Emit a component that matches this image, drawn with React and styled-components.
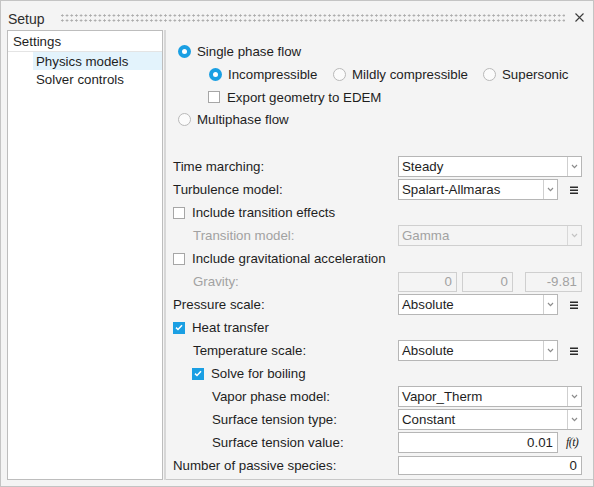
import React from "react";
import styled, { createGlobalStyle } from "styled-components";

const Global = createGlobalStyle`
  html, body { margin: 0; padding: 0; background: #f4f4f4; }
  body { font-family: "Liberation Sans", Arial, sans-serif; font-size: 13.3px; color: #1e1e1e; }
  * { box-sizing: border-box; }
`;

const Window = styled.div`
  width: 594px;
  height: 487px;
  border: 1px solid #c4c4c4;
  background: #f4f4f4;
  display: flex;
  flex-direction: column;
`;

const TitleBar = styled.div`
  height: 29px;
  flex: none;
  display: flex;
  align-items: center;
  padding-top: 4px;
`;

const Title = styled.div`
  font-size: 14px;
  color: #2e2e2e;
  padding-left: 7px;
  padding-top: 3px;
`;

const Grip = styled.div`
  flex: 1;
  height: 10px;
  margin: 1px 9px 0 15px;
  background-image: radial-gradient(circle, #ababab 0.9px, transparent 1.3px);
  background-size: 4.7px 5px;
  background-position: 0 0;
`;

const CloseBtn = styled.div`
  width: 10px;
  height: 10px;
  margin-right: 9px;
  display: flex;
  align-items: center;
  justify-content: center;
`;

const Body = styled.div`
  flex: 1;
  display: flex;
  padding-bottom: 6px;
`;

const TreePanel = styled.div`
  width: 156px;
  margin-left: 6px;
  background: #ffffff;
  border: 1px solid #bdbdbd;
  display: flex;
  flex-direction: column;
`;

const TreeHeader = styled.div`
  height: 21px;
  border-bottom: 1px solid #e4e4e4;
  padding-left: 5px;
  display: flex;
  align-items: center;
  color: #1e1e1e;
`;

const TreeItem = styled.div`
  height: 18px;
  margin-left: 25px;
  padding-left: 3px;
  display: flex;
  align-items: center;
  background: ${(p) => (p.$selected ? "#e3f3fc" : "transparent")};
`;

const Splitter = styled.div`
  width: 2px;
  margin-left: 1px;
  background: #d7d7d7;
`;

const FormPanel = styled.div`
  flex: 1;
  padding: 10px 11px 0 7px;
  border-bottom: 1px solid #c8c8c8;
  display: flex;
  flex-direction: column;
`;

const Row = styled.div`
  height: ${(p) => p.$h || 23}px;
  flex: none;
  display: flex;
  align-items: center;
  padding-left: ${(p) => p.$indent || 0}px;
`;

const Spacer = styled.div`
  height: ${(p) => p.$h}px;
  flex: none;
`;

const Label = styled.div`
  flex: 1;
  padding-left: ${(p) => p.$indent || 0}px;
  color: ${(p) => (p.$disabled ? "#a2a2a2" : "#1e1e1e")};
  white-space: nowrap;
`;

const Controls = styled.div`
  width: 184px;
  display: flex;
  align-items: center;
`;

const RadioItem = styled.label`
  display: flex;
  align-items: center;
  gap: 6px;
  width: ${(p) => (p.$w ? `${p.$w}px` : "auto")};
  flex: none;
  white-space: nowrap;
`;

const RadioDot = styled.span`
  width: 13px;
  height: 13px;
  border-radius: 50%;
  flex: none;
  display: flex;
  align-items: center;
  justify-content: center;
  background: ${(p) => (p.$on ? "#1a9fe3" : "#fbfbfb")};
  border: ${(p) => (p.$on ? "none" : "1px solid #b9b9b9")};
  &::after {
    content: "";
    width: 5px;
    height: 5px;
    border-radius: 50%;
    background: #ffffff;
    display: ${(p) => (p.$on ? "block" : "none")};
  }
`;

const CheckItem = styled.label`
  display: flex;
  align-items: center;
  gap: 7px;
  white-space: nowrap;
`;

const CheckBox = styled.span`
  width: 12px;
  height: 12px;
  flex: none;
  display: flex;
  align-items: center;
  justify-content: center;
  background: ${(p) => (p.$on ? "#1a9fe3" : "#ffffff")};
  border: ${(p) => (p.$on ? "none" : "1px solid #a6a6a6")};
`;

const SelectBox = styled.div`
  width: ${(p) => p.$w}px;
  height: 21px;
  display: flex;
  border: 1px solid ${(p) => (p.$disabled ? "#cfcfcf" : "#b6b6b6")};
  background: ${(p) => (p.$disabled ? "#f4f4f4" : "#ffffff")};
  color: ${(p) => (p.$disabled ? "#a2a2a2" : "#1e1e1e")};
`;

const SelectValue = styled.div`
  flex: 1;
  padding-left: 3px;
  display: flex;
  align-items: center;
`;

const SelectArrow = styled.div`
  width: 14px;
  border-left: 1px solid ${(p) => (p.$disabled ? "#d8d8d8" : "#cfcfcf")};
  display: flex;
  align-items: center;
  justify-content: center;
`;

const MenuBtn = styled.div`
  width: 24px;
  height: 21px;
  display: flex;
  align-items: center;
  padding-left: 12px;
`;

const FxBtn = styled.div`
  width: 24px;
  padding-left: 8px;
  font-family: "Liberation Serif", "Times New Roman", serif;
  font-style: italic;
  font-size: 12px;
  letter-spacing: -0.6px;
  color: #1a1a1a;
`;

const NumInput = styled.div`
  width: ${(p) => p.$w}px;
  margin-right: ${(p) => p.$mr || 0}px;
  height: ${(p) => p.$h || 21}px;
  border: 1px solid ${(p) => (p.$disabled ? "#cfcfcf" : "#b6b6b6")};
  background: ${(p) => (p.$disabled ? "#f4f4f4" : "#ffffff")};
  color: ${(p) => (p.$disabled ? "#a2a2a2" : "#1e1e1e")};
  display: flex;
  align-items: center;
  justify-content: flex-end;
  padding-right: 4px;
`;

function Chevron({ disabled }) {
  return (
    <svg width="7" height="5" viewBox="0 0 7 5">
      <path d="M1 1 L3.5 3.6 L6 1" fill="none" stroke={disabled ? "#c4c4c4" : "#8c8c8c"} strokeWidth="1.2" />
    </svg>
  );
}

function Select({ value, w = 184, disabled }) {
  return (
    <SelectBox $w={w} $disabled={disabled}>
      <SelectValue>{value}</SelectValue>
      <SelectArrow $disabled={disabled}>
        <Chevron disabled={disabled} />
      </SelectArrow>
    </SelectBox>
  );
}

function Menu() {
  return (
    <MenuBtn>
      <svg width="8" height="8" viewBox="0 0 8 8">
        <rect x="0" y="0.5" width="8" height="1.5" fill="#2a2a2a" />
        <rect x="0" y="3.5" width="8" height="1.5" fill="#2a2a2a" />
        <rect x="0" y="6.5" width="8" height="1.5" fill="#2a2a2a" />
      </svg>
    </MenuBtn>
  );
}

function Radio({ on, children, w }) {
  return (
    <RadioItem $w={w}>
      <RadioDot $on={on} />
      {children}
    </RadioItem>
  );
}

function Check({ on, children }) {
  return (
    <CheckItem>
      <CheckBox $on={on}>
        {on && (
          <svg width="8" height="7" viewBox="0 0 8 7">
            <path d="M1 3.6 L3 5.5 L7 1.2" fill="none" stroke="#fff" strokeWidth="1.5" />
          </svg>
        )}
      </CheckBox>
      {children}
    </CheckItem>
  );
}

export default function App() {
  return (
    <>
      <Global />
      <Window>
        <TitleBar>
          <Title>Setup</Title>
          <Grip />
          <CloseBtn>
            <svg width="9" height="9" viewBox="0 0 9 9">
              <path d="M0.5 0.5 L8.5 8.5 M8.5 0.5 L0.5 8.5" stroke="#3c3c3c" strokeWidth="1.1" />
            </svg>
          </CloseBtn>
        </TitleBar>
        <Body>
          <TreePanel>
            <TreeHeader>Settings</TreeHeader>
            <TreeItem $selected>Physics models</TreeItem>
            <TreeItem>Solver controls</TreeItem>
          </TreePanel>
          <Splitter />
          <FormPanel>
            <Row $indent={5}>
              <Radio on>Single phase flow</Radio>
            </Row>
            <Row $indent={36}>
              <Radio on w={124}>Incompressible</Radio>
              <Radio w={150}>Mildly compressible</Radio>
              <Radio>Supersonic</Radio>
            </Row>
            <Row $indent={35} $h={22}>
              <Check>Export geometry to EDEM</Check>
            </Row>
            <Row $indent={5}>
              <Radio>Multiphase flow</Radio>
            </Row>
            <Spacer $h={24} />

            <Row>
              <Label>Time marching:</Label>
              <Controls>
                <Select value="Steady" />
              </Controls>
            </Row>
            <Row>
              <Label>Turbulence model:</Label>
              <Controls>
                <Select value="Spalart-Allmaras" w={160} />
                <Menu />
              </Controls>
            </Row>
            <Row>
              <Check>Include transition effects</Check>
            </Row>
            <Row>
              <Label $indent={20} $disabled>Transition model:</Label>
              <Controls>
                <Select value="Gamma" disabled />
              </Controls>
            </Row>
            <Row>
              <Check>Include gravitational acceleration</Check>
            </Row>
            <Row>
              <Label $indent={20} $disabled>Gravity:</Label>
              <Controls>
                <NumInput $w={59} $mr={5} $h={20} $disabled>0</NumInput>
                <NumInput $w={51} $mr={12} $h={20} $disabled>0</NumInput>
                <NumInput $w={57} $h={20} $disabled>-9.81</NumInput>
              </Controls>
            </Row>
            <Row>
              <Label>Pressure scale:</Label>
              <Controls>
                <Select value="Absolute" w={160} />
                <Menu />
              </Controls>
            </Row>
            <Row>
              <Check on>Heat transfer</Check>
            </Row>
            <Row>
              <Label $indent={20}>Temperature scale:</Label>
              <Controls>
                <Select value="Absolute" w={160} />
                <Menu />
              </Controls>
            </Row>
            <Row $indent={19}>
              <Check on>Solve for boiling</Check>
            </Row>
            <Row>
              <Label $indent={39}>Vapor phase model:</Label>
              <Controls>
                <Select value="Vapor_Therm" />
              </Controls>
            </Row>
            <Row>
              <Label $indent={39}>Surface tension type:</Label>
              <Controls>
                <Select value="Constant" />
              </Controls>
            </Row>
            <Row>
              <Label $indent={39}>Surface tension value:</Label>
              <Controls>
                <NumInput $w={160}>0.01</NumInput>
                <FxBtn>f(t)</FxBtn>
              </Controls>
            </Row>
            <Row>
              <Label>Number of passive species:</Label>
              <Controls>
                <NumInput $w={184} $h={19}>0</NumInput>
              </Controls>
            </Row>
          </FormPanel>
        </Body>
      </Window>
    </>
  );
}
